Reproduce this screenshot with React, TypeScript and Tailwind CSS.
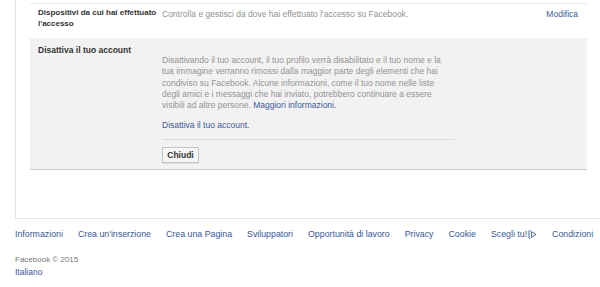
const footerLinks = [
  'Informazioni',
  "Crea un'inserzione",
  'Crea una Pagina',
  'Sviluppatori',
  'Opportunità di lavoro',
  'Privacy',
  'Cookie',
]

const AdChoicesIcon = () => (
  <svg width="9" height="9" viewBox="0 0 9 9" className="ml-[1px] inline-block">
    <path d="M2.5 0.8 H1 V8.2 H2.5" fill="none" stroke="#365899" strokeWidth="0.9" />
    <path d="M3.6 1.6 L8 4.5 L3.6 7.4 Z" fill="none" stroke="#365899" strokeWidth="0.9" strokeLinejoin="round" />
  </svg>
)

export default function App() {
  return (
    <div className="w-[600px] h-[287px] overflow-hidden bg-white font-['Liberation_Sans',Arial,sans-serif]">
      <div className="ml-[15px] h-[219px] border-l border-b border-[#e3e3e3] pl-[14px] pr-[13px] pt-[3px]">
        <div className="border-t border-[#ebebeb]">
          <div className="flex h-[34px] pt-[4px] pl-[8px] pr-[9px]">
            <div className="w-[124px] whitespace-nowrap text-[8px] leading-[10.5px] font-bold text-[#333333]">
              Dispositivi da cui hai effettuato
              <br />
              l'accesso
            </div>
            <div className="flex-1 pt-[1px] text-[8.5px] leading-[10.5px] text-[#929292]">
              Controlla e gestisci da dove hai effettuato l'accesso su Facebook.
            </div>
            <a className="pt-[1px] text-[8.5px] leading-[10.5px] text-[#3b5998]">Modifica</a>
          </div>
        </div>
        <div className="flex h-[132px] bg-[#f2f2f2] border-b border-[#cccccc] pl-[8px] pt-[7px]">
          <div className="w-[124px] text-[8.5px] leading-[11px] font-bold text-[#333333]">
            Disattiva il tuo account
          </div>
          <div className="w-[293px] pt-[10px]">
            <p className="pr-[6px] text-[8.5px] leading-[11.3px] text-[#929292]">
              Disattivando il tuo account, il tuo profilo verrà disabilitato e il tuo nome e la tua
              immagine verranno rimossi dalla maggior parte degli elementi che hai condiviso su
              Facebook. Alcune informazioni, come il tuo nome nelle liste degli amici e i messaggi
              che hai inviato, potrebbero continuare a essere visibili ad altre persone.{' '}
              <a className="text-[#3b5998]">Maggiori informazioni.</a>
            </p>
            <div className="mt-[9px] pb-[8px] border-b border-[#dddddd] text-[8.5px] leading-[11px] text-[#3b5998]">
              Disattiva il tuo account.
            </div>
            <button className="mt-[7px] h-[16px] w-[37px] border border-[#c4c4c4] bg-[#f6f6f6] text-[8.5px] leading-[14px] font-bold text-[#333333] shadow-[0_1px_0_rgba(0,0,0,0.08)]">
              Chiudi
            </button>
          </div>
        </div>
      </div>
      <div className="flex gap-[15px] pl-[15px] pt-[9px] text-[8.8px] leading-[12px] text-[#365899]">
        {footerLinks.map(link => (
          <a key={link}>{link}</a>
        ))}
        <a className="flex items-center">
          Scegli tu!
          <AdChoicesIcon />
        </a>
        <a>Condizioni</a>
      </div>
      <div className="pl-[15px] pt-[14px] text-[8px] leading-[12px] text-[#777777]">
        Facebook © 2015
      </div>
      <div className="pl-[15px] text-[8.5px] leading-[12px] text-[#365899]">Italiano</div>
    </div>
  )
}
